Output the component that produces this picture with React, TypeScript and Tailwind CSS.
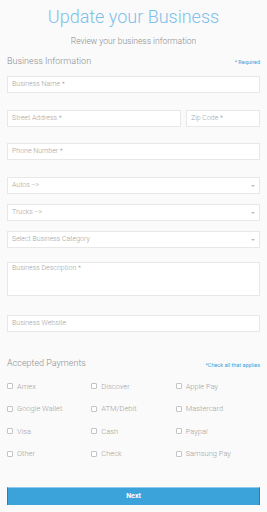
import React from "react";

const payments = [
    "Amex", "Discover", "Apple Pay",
    "Google Wallet", "ATM/Debit", "Mastercard",
    "Visa", "Cash", "Paypal",
    "Other", "Check", "Samsung Pay",
];

const Field: React.FC<{ label: string; className?: string }> = ({ label, className = "" }) => (
    <div className={`h-[17px] bg-white border border-[#e8e8e8] flex items-center px-[4px] text-[7px] font-light text-[#a3a3a3] ${className}`}>
        {label}
    </div>
);

const SelectField: React.FC<{ label: string; className?: string }> = ({ label, className = "" }) => (
    <div className={`h-[17px] bg-white border border-[#e8e8e8] flex items-center justify-between pl-[4px] pr-[4px] text-[7px] font-light text-[#a3a3a3] ${className}`}>
        <span>{label}</span>
        <span className="w-0 h-0 border-l-[2px] border-r-[2px] border-t-[2px] border-l-transparent border-r-transparent border-t-[#bbb]" />
    </div>
);

export default function App() {
    return (
        <div className="min-h-screen w-[267px] bg-[#fafafa] px-[7px] pt-[5px] pb-[8px]" style={{ fontFamily: "Roboto, 'Liberation Sans', sans-serif" }}>
            <h1 className="text-center text-[18px] leading-[24px] font-light text-[#7cc1ea]">Update your Business</h1>
            <p className="mt-[6px] text-center text-[8.5px] leading-[12px] font-light text-[#8a8a8a]">Review your business information</p>

            <div className="mt-[8px] flex items-end justify-between h-[12px]">
                <span className="text-[9px] leading-[12px] font-light text-[#8f8f8f]">Business Information</span>
                <span className="text-[5.5px] leading-[10px] text-[#3aa0dc]">* Required</span>
            </div>

            <Field label="Business Name *" className="mt-[9px]" />
            <div className="mt-[17px] flex gap-[5px]">
                <Field label="Street Address *" className="flex-1" />
                <Field label="Zip Code *" className="w-[74px]" />
            </div>
            <Field label="Phone Number *" className="mt-[16px]" />

            <SelectField label="Autos -->" className="mt-[17px]" />
            <SelectField label="Trucks -->" className="mt-[10px]" />
            <SelectField label="Select Business Category" className="mt-[10px]" />

            <div className="mt-[14px] h-[34px] bg-white border border-[#e8e8e8] px-[4px] pt-[1px] text-[7px] leading-[9px] font-light text-[#a3a3a3]">
                Business Description *
            </div>
            <Field label="Business Website" className="mt-[19px]" />

            <div className="mt-[26px] flex items-center justify-between h-[12px]">
                <span className="text-[9px] font-light text-[#8f8f8f]">Accepted Payments</span>
                <span className="text-[5.5px] text-[#3aa0dc] pt-[2px]">*Check all that applies</span>
            </div>

            <div className="mt-[10px] grid grid-cols-3 gap-y-[10px]">
                {payments.map((p) => (
                    <label key={p} className="flex items-center gap-[4px] h-[12.5px] text-[7.5px] font-light text-[#a3a3a3]">
                        <span className="w-[6px] h-[6px] border border-[#c4c4c4] rounded-[1px] bg-white" />
                        {p}
                    </label>
                ))}
            </div>

            <button className="mt-[27px] w-full h-[18px] bg-[#3ba3da] border-t border-t-[#8ccbef] border-x border-x-[#1487c8] text-white text-[7px] font-bold">
                Next
            </button>
        </div>
    );
}
